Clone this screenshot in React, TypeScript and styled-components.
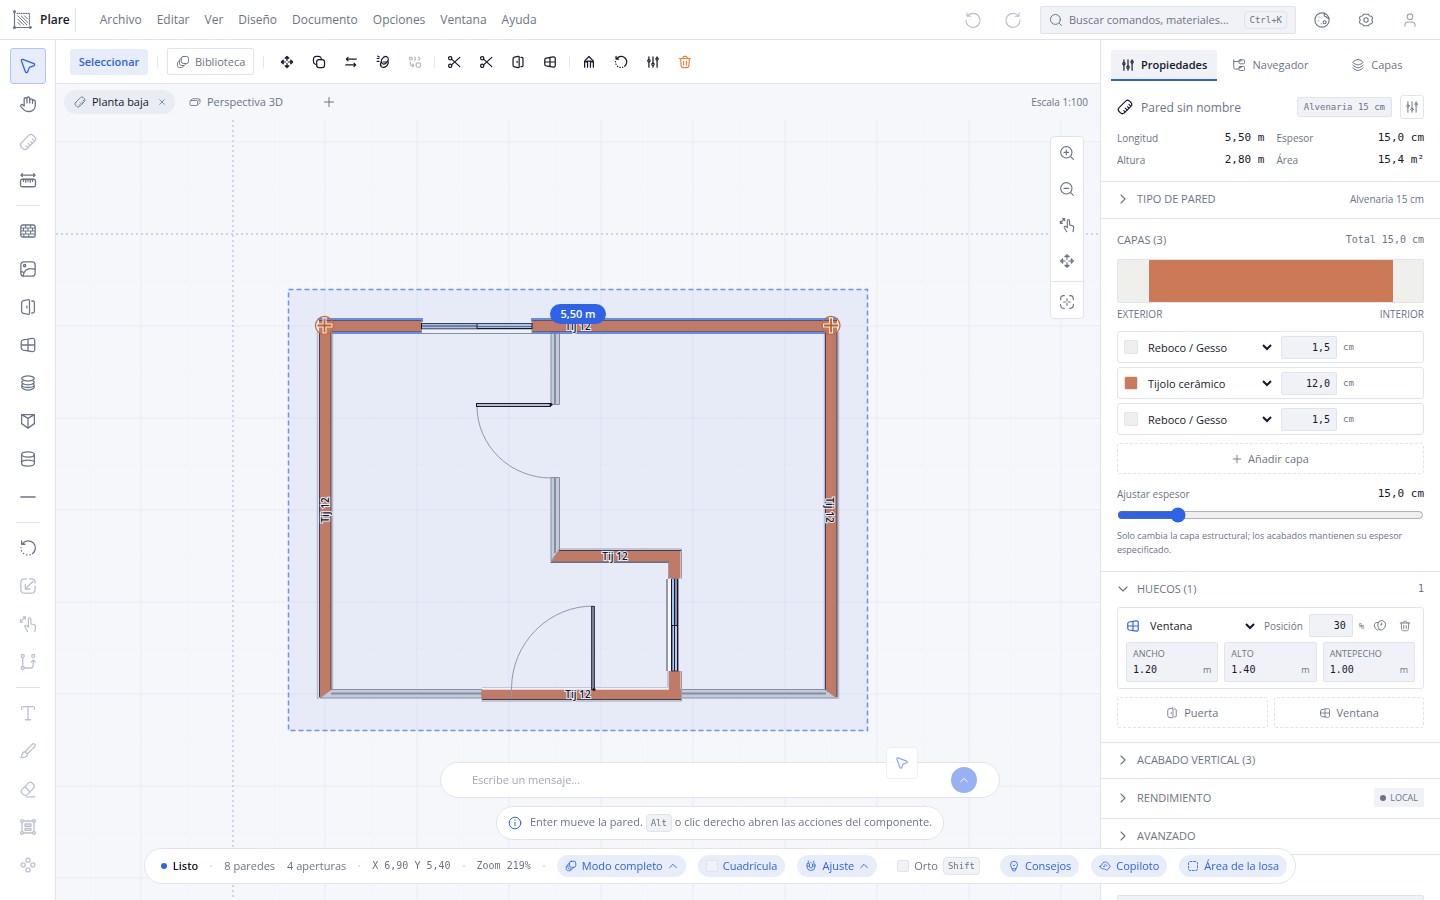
import React from "react";
import styled, { createGlobalStyle, css } from "styled-components";

const color = {
  line: "#dfe4ed",
  text: "#6b7486",
  faint: "#b9c0d0",
  dark: "#16182c",
  accent: "#2e63e7",
  accentSoft: "#e7edfb",
  field: "#f0f2f7",
  canvas: "#f5f7fb",
  brick: "#cb7957",
  plaster: "#eff0ec",
};
const sans = '"Open Sans", "Noto Sans", sans-serif';
const mono = '"DejaVu Sans Mono", "Liberation Mono", monospace';

const GlobalStyle = createGlobalStyle`
  *, *::before, *::after { box-sizing: border-box; }
  body { margin: 0; font-family: ${sans}; font-size: 11px; line-height: 16px; color: ${color.text}; background: ${color.canvas}; }
  button, input, select { font: inherit; color: inherit; margin: 0; }
  button { border: 0; background: none; padding: 0; }
  h1, h2, h3, p, dl, dd { margin: 0; font: inherit; }
`;

/* ---------- icons, drawn on a 24 unit grid ---------- */

const disc = (x: number, y: number, r = 2) => <circle cx={x} cy={y} r={r} />;

const icons: Record<string, React.ReactNode> = {
  logo: (
    <>
      <path d="M3 1v20h20" />
      <path d="M6 4h15v14" strokeDasharray="1 1.6" />
      <path d="M7 7l11 11M7 11l7 7M7 15l3 3M11 7l8 8M15 7l4 4" strokeWidth="1.2" />
      <circle cx="3" cy="2" r="1" fill="currentColor" />
      <circle cx="3" cy="21" r="1.2" fill="currentColor" />
      <circle cx="22" cy="21" r="1" fill="currentColor" />
    </>
  ),
  cursor: <path d="M3.2 5.1c-.5-1.3.6-2.4 1.9-1.9l14.8 5.6c1.5.6 1.4 2.7-.1 3.1l-5.3 1.6c-.5.2-.9.5-1 1l-1.9 5.2c-.5 1.5-2.6 1.5-3.1 0z" />,
  hand: (
    <path d="M18 11V7a1.8 1.8 0 0 0-3.7 0M14.3 10.5V4.5a1.8 1.8 0 0 0-3.7 0v6M10.6 10.5V5.5a1.8 1.8 0 0 0-3.7 0v9M18 8.5a1.8 1.8 0 1 1 3.7 0V14a8 8 0 0 1-8 8h-1.5c-3 0-4.7-1-6-2.5L2.7 15.8a1.8 1.8 0 0 1 2.6-2.5l1.6 1.5" />
  ),
  ruler: (
    <g transform="rotate(-45 12 12)">
      <rect x="1" y="6.5" width="22" height="11" rx="4" />
      <path d="M7 17.5v-3M11 17.5v-4M15 17.5v-3M19 16.5v-3" />
    </g>
  ),
  measure: (
    <>
      <path d="M3 5.5h18M4.5 3.5l-2 2 2 2M19.5 3.5l2 2-2 2" />
      <rect x="2" y="11" width="20" height="10" rx="2.5" />
      <path d="M6 11v3M9 11v4M12 11v3M15 11v4M18 11v3" />
    </>
  ),
  wall: (
    <>
      <rect x="2.5" y="4" width="19" height="16" rx="2.5" />
      <path
        d="M2.5 8h19M2.5 12h19M2.5 16h19M9 4v4M15.5 4v4M6 8v4M12 8v4M18 8v4M9 12v4M15.5 12v4M6.5 16v4M13 16v4"
        strokeWidth="1.4"
      />
    </>
  ),
  image: (
    <>
      <rect x="2.5" y="2.5" width="19" height="19" rx="4" />
      {disc(7.5, 7.5, 1.5)}
      <path d="M5.5 21c1-6 5-9.5 10-9.5 2.5 0 4 .3 6 1M2.5 15.5c1.5 0 3 .5 4 1.5" />
    </>
  ),
  door: (
    <path d="M12.5 2.3 6 3.5C4.5 3.8 3.5 5 3.5 6.5v11c0 1.5 1 2.7 2.5 3l6.5 1.2c1 .2 1.5-.5 1.5-1.5V3.8c0-1-.5-1.7-1.5-1.5zM10.5 11v2M17 4h1.5c1.2 0 2 .8 2 2v12c0 1.2-.8 2-2 2H17" />
  ),
  window: (
    <path d="M5.5 5.2 17.5 3.2c2-.3 3.5 1 3.5 3v11.6c0 2-1.5 3.3-3.5 3L5.5 18.8c-1.5-.3-2.5-1.5-2.5-3V8.2c0-1.5 1-2.7 2.5-3zM12 4v16M3 12h18" />
  ),
  slab: (
    <path d="M12 2.5c3 0 8.5 1.6 8.5 3.5S15 9.5 12 9.500 3.500 7.900 3.500 6 9 2.500 12 2.500zM5 9.500c-4 2 1.500 5 7 5s11-3 7-5M5 13.500c-4 2.500 1.500 4.500 7 4.500s11-2 7-4.500M3.500 17c0 2.500 5 4.500 8.500 4.500s8.500-2 8.500-4.500" />
  ),
  layers: (
    <path d="M12 2.5c1.5 0 9 3 9 4.7S13.5 12 12 12 3 8.9 3 7.2s7.5-4.7 9-4.7zM3 12c0 1.7 7.5 4.8 9 4.8s9-3.1 9-4.8M3 16.7c0 1.7 7.5 4.8 9 4.8s9-3.1 9-4.8" />
  ),
  roof: <path d="M3.5 3.5 12 8.5l8.5-5M3.5 3.5h17v12L12 21.5l-8.5-6zM12 8.5v13" />,
  cylinder: (
    <>
      <ellipse cx="12" cy="6" rx="8.5" ry="3.5" />
      <path d="M3.5 6v12c0 2 3.8 3.5 8.5 3.5s8.5-1.5 8.5-3.5V6M3.5 17c0-2 3.8-3.5 8.5-3.5s8.5 1.5 8.5 3.5" />
    </>
  ),
  minus: <path d="M2.5 12h19" />,
  rotate: (
    <>
      <path d="M3.5 2.5V7H8M4.5 6.5A9.500 9.500 0 1 1 18 19.500" />
      <path d="M15 21a9.500 9.500 0 0 1-12.400-9.500" strokeDasharray=".5 4" />
    </>
  ),
  resize: (
    <path d="M10 2.5H7.5c-3 0-5 2-5 5v9c0 3 2 5 5 5h9c3 0 5-2 5-5V12M14 2.5h2.5c3 0 5 2 5 5V8M18.5 6 8.5 16M8.5 10v6h6" />
  ),
  touch: (
    <path d="M11.5 22 8 16c-.9-1.7 1.2-3 2.4-1.7L12.500 16V5.500a1.700 1.700 0 0 1 3.400 0V12l3.900.9c1.700.4 2.500 1.700 2.200 3.400L21 22M8.500 2.500 2 9M8.500 2.500H5.500M8.500 2.500v3M2 6v3.500h3" />
  ),
  nodes: (
    <>
      {disc(5, 4, 2)}
      {disc(5, 20, 2)}
      {disc(19, 4, 2)}
      <path d="M5 6v12M7 20h8c2.5 0 4-1.5 4-4V9M16.5 12 19 9.5l2.5 2.5" />
    </>
  ),
  text: <path d="M12 3.5v17.5M8.5 21h7M3.5 7V5c0-1 .5-1.5 1.5-1.5h14c1 0 1.5.5 1.5 1.5v2" />,
  brush: <path d="M21 3c-1-1-2.5-.8-3.5.2L8 13l3 3 9.800-9.500c1-1 1.200-2.500.2-3.500zM8 13c-2 0-3.500 1.500-4 4-.2 1.200-.7 2.200-1.800 3.500 3 .5 6 .5 7.500-1 1-1 1.500-2.300 1.300-3.500" />,
  eraser: <path d="M4 12.5 12.5 4c1.5-1.5 3.5-1.5 5 0l2 2c1.5 1.5 1.5 3.5 0 5L11 19.5c-1.500 1.500-3.500 1.500-5 0l-2-2c-1.500-1.500-1.500-3.500 0-5zM8 9l7 7M10 22.500h11" />,
  frame: (
    <>
      {disc(4, 4, 1.8)}
      {disc(20, 4, 1.8)}
      {disc(4, 20, 1.8)}
      {disc(20, 20, 1.8)}
      <path d="M6 4h12M6 20h12M4 6v12M20 6v12M8 8h8v3H8zM8 14h8v2.5H8z" />
    </>
  ),
  clover: (
    <>
      {disc(12, 5.5, 2.8)}
      {disc(12, 18.5, 2.8)}
      {disc(5.5, 12, 2.8)}
      {disc(18.5, 12, 2.8)}
    </>
  ),
  library: (
    <>
      <rect x="9" y="2.5" width="12.5" height="12" rx="3.5" />
      <path d="M9 6.5C7 6.5 5.8 8 5.8 10v4c0 2.5 1.5 4 4 4h3.500c2 0 3.200-1 3.700-3M5.800 10.500c-2 0-3.300 1.200-3.300 3.500v3.500c0 2.500 1.500 4 4 4H9c2 0 3.500-1 3.700-3" />
    </>
  ),
  move: (
    <path d="M8.8 5.5 12 2.3l3.2 3.2zM8.8 18.5 12 21.700l3.200-3.200zM5.500 8.800 2.300 12l3.200 3.200zM18.500 8.800 21.700 12l-3.200 3.200zM12 6v3.500M12 14.500V18M6 12h3.500M14.500 12H18" />
  ),
  copy: (
    <>
      <rect x="8" y="8" width="13.5" height="13.5" rx="4" />
      <path d="M16 8c0-4-1.5-5.5-5.5-5.5H8c-4 0-5.500 1.500-5.500 5.500v2.500c0 4 1.500 5.500 5.500 5.500" />
    </>
  ),
  swap: <path d="M21 7H4M7 4 4 7l3 3M3 17h17M17 14l3 3-3 3" />,
  mirror: (
    <>
      <ellipse cx="15" cy="9" rx="7" ry="5" transform="rotate(-50 15 9)" />
      <path d="M9 12c-2 3-1.5 6 0 8 2.5 2.5 7 1.5 10-2 2-2.500 2.800-5.500 1.500-8M2 6h3M2 11h3M3 2l2.500 1.500M12 12h6" />
    </>
  ),
  array: (
    <>
      {disc(5, 6, 2.5)}
      <path d="M11 3.5c2.5 1 2.5 4 0 5M17.5 3.5c3.5 1 3.5 4 0 5M4 12v4c0 1.500.8 2 2 2h3M7.500 15.500 10 18l-2.500 2.500" />
      <rect x="14" y="13.5" width="7.5" height="7.5" rx="2.5" />
    </>
  ),
  scissors: (
    <>
      {disc(5.5, 5.5, 2.8)}
      {disc(5.5, 18.5, 2.8)}
      <path d="M22 4 7.8 17M22 20 7.8 7" />
    </>
  ),
  pencil: <path d="M4.5 21V10.5L12 2.5l7.5 8V21M9.5 21v-9M14.5 21v-9M4.5 12c2 0 3.5-.5 5-1.5h5c1.500 1 3 1.500 5 1.500" />,
  sliders: (
    <>
      <path d="M5 3v5M5 12v9M12 3v11M12 18v3M19 3v2M19 9v12" />
      {disc(5, 10, 2)}
      {disc(12, 16, 2)}
      {disc(19, 7, 2)}
    </>
  ),
  trash: <path d="M2.5 6h19M19.5 6l-.8 12c-.2 2.5-1.2 3.5-3.7 3.5H9c-2.500 0-3.500-1-3.700-3.500L4.500 6M8 6l1-2.500c.3-.8.8-1 1.500-1h3c.7 0 1.200.2 1.500 1L16 6M9.500 11v6M14.500 11v6" />,
  undo: <path d="M4 2.5V7h5M4.5 7A9.300 9.300 0 1 1 2.700 12" />,
  redo: <path d="M20 2.5V7h-5M19.5 7A9.300 9.300 0 1 0 21.300 12" />,
  search: (
    <>
      {disc(11, 11, 8.5)}
      <path d="m17.5 17.5 4 4" />
    </>
  ),
  theme: (
    <>
      {disc(12, 12, 9.5)}
      <path d="M15.5 3.5c-1 2-.5 4 2 4 .5 2 2 2.500 4 2.500M8 8v.1M7 13v.1M11 17v.1" />
      {disc(15.5, 15, 2)}
    </>
  ),
  gear: (
    <>
      <path d="M8.5 3.5h7l2 2.5 3 .5 1.500 3-1.500 2.500 1.500 2.500-1.500 3-3 .5-2 2.500h-7l-2-2.500-3-.5-1.500-3L3.500 12 2 9.500l1.500-3 3-.5z" />
      {disc(12, 12, 3.3)}
    </>
  ),
  user: (
    <>
      {disc(12, 7, 4.2)}
      <path d="M4.5 21.5v-2c0-2.5 2-4.500 4.500-4.500h6c2.500 0 4.500 2 4.500 4.500v2" />
    </>
  ),
  tree: (
    <>
      <path d="M3 3v13c0 2 1 3 3 3h5M3 6h8" />
      <rect x="12" y="3" width="9.5" height="7" rx="2" />
      <rect x="12" y="14.5" width="9.5" height="7" rx="2" />
      <path d="M12 5h4M12 16.5h4" />
    </>
  ),
  box: <path d="M4 9h11c1.2 0 2 .8 2 2v6c0 1.2-.8 2-2 2H4c-1.200 0-2-.8-2-2v-6c0-1.200.8-2 2-2zM3 9.500C5 6 6.500 5.500 8 5.500h11c2 0 3 1 3 3v4c0 2-2 3.500-5 5M17 11l4.500-4" />,
  close: <path d="M5 5l14 14M19 5 5 19" />,
  plus: <path d="M12 3v18M3 12h18" />,
  zoomIn: (
    <>
      {disc(11, 11, 8.5)}
      <path d="m17.5 17.5 4 4M7.5 11h7M11 7.5v7" />
    </>
  ),
  zoomOut: (
    <>
      {disc(11, 11, 8.5)}
      <path d="m17.5 17.5 4 4M7.5 11h7" />
    </>
  ),
  focus: <path d="M8 2.5H7C4 2.500 2.500 4 2.500 7v1.500M16 2.500h1c3 0 4.500 1.500 4.500 4.500v1.500M8 21.500H7c-3 0-4.500-1.500-4.500-4.500v-1.500M16 21.500h1c3 0 4.500-1.500 4.500-4.500v-1.500M12 7v3M12 14v3M7 12h3M14 12h3" />,
  right: <path d="m8 4 8 8-8 8" />,
  down: <path d="m4 8 8 8 8-8" />,
  up: <path d="m4 16 8-8 8 8" />,
  info: (
    <>
      {disc(12, 12, 10)}
      <path d="M12 11v6M12 7v.5" />
    </>
  ),
  magnet: <path d="M4 8v5a8 8 0 0 0 16 0V8h-5v5a3 3 0 0 1-6 0V8zM4 12h5M15 12h5M6.5 2v3M17.5 2v3M11 4l2 2" />,
  bulb: <path d="M8 17c0-2-3-3.500-3-7.500a7 7 0 0 1 14 0c0 4-3 5.500-3 7.500zM8.500 17v2c0 1.700 1 3 3.500 3s3.500-1.300 3.500-3v-2M10 10l2 2 2-2" />,
  copilot: (
    <path d="M2 13c0-2 2-2.500 3.500-2.500C6 6.500 9 4 12.500 4c4 0 6.500 2.500 7 5.500 1.500.3 2.500 1.500 2.500 3s-1 3-2.500 3c-.5 3-2.500 5-5 4.500-1.500-.3-2-1.500-3.500-2-2-.7-4 .5-5.500-1.500C3.500 16.500 2 15 2 13zM11 10c2-1.500 4.500-.5 4.500 2M9 13h2" />
  ),
  area: <rect x="3" y="3" width="18" height="18" rx="3" strokeDasharray="4 3.2" />,
  palette: (
    <path d="M8.5 6c-3-.5-5.500 1-6 3.500-.6 3 1 6.500 4 9 1 .8 2.500 1 3 0M10 5c2-2.500 5-3 8-1.500s4 5 3 8.500-4 7-7 7-5-3-5.500-6.500S8.500 7 10 5zM15 7v2M13 10h2" />
  ),
};

const Svg = styled.svg`
  display: block;
  flex: none;
  fill: none;
  stroke: currentColor;
  stroke-linecap: round;
  stroke-linejoin: round;
`;

const Icon = ({ name, size = 16, weight = 1.7 }: { name: string; size?: number; weight?: number }) => (
  <Svg viewBox="0 0 24 24" width={size} height={size} strokeWidth={weight} aria-hidden="true">
    {icons[name]}
  </Svg>
);

/* ---------- frame ---------- */

const Shell = styled.div`
  display: grid;
  grid-template: 40px minmax(0, 1fr) / 56px minmax(0, 1fr) 340px;
  height: 100vh;
  overflow: hidden;
`;
const Header = styled.header`
  grid-column: 1 / -1;
  display: flex;
  align-items: center;
  padding: 0 14px 0 12px;
  background: #fff;
  border-bottom: 1px solid ${color.line};
`;
const Brand = styled.div`
  display: flex;
  align-items: center;
  gap: 8px;
  height: 24px;
  padding-right: 5px;
  margin-right: 17px;
  border-right: 1px solid ${color.line};
  color: ${color.text};
`;
const BrandName = styled.h1`
  color: ${color.dark};
  font-size: 12px;
  font-weight: 600;
`;
const Menu = styled.nav`
  display: flex;
  flex: 1;
  gap: 1px;
`;
const MenuItem = styled.button`
  padding: 4px 7px;
  font-size: 12px;
`;
const HeaderActions = styled.div`
  display: flex;
  align-items: center;
  gap: 12px;
`;
const IconButton = styled.button<{ $size?: number; $tone?: string }>`
  display: grid;
  place-items: center;
  flex: none;
  width: ${(p) => p.$size ?? 28}px;
  height: ${(p) => p.$size ?? 28}px;
  color: ${(p) => p.$tone ?? "inherit"};
`;
const SearchBox = styled.button`
  display: flex;
  align-items: center;
  gap: 6px;
  width: 256px;
  height: 28px;
  margin: 0 10px 0 1px;
  padding: 0 8px;
  border: 1px solid ${color.line};
  border-radius: 2px;
  background: ${color.field};
`;
const SearchText = styled.span`
  flex: 1;
  text-align: left;
  white-space: nowrap;
`;
const Key = styled.kbd<{ $fill?: boolean }>`
  display: inline-block;
  padding: 0 4px;
  border: 1px solid ${color.line};
  border-radius: 4px;
  background: ${(p) => (p.$fill ? color.field : "transparent")};
  font-family: ${mono};
  font-size: 9px;
  line-height: 16px;
`;

const Rail = styled.nav`
  display: flex;
  flex-direction: column;
  align-items: center;
  gap: 2px;
  padding-top: 8px;
  background: #fff;
  border-right: 1px solid ${color.line};
`;
const RailButton = styled.button<{ $active?: boolean; $off?: boolean }>`
  display: grid;
  place-items: center;
  flex: none;
  width: 36px;
  height: 36px;
  border: 1px solid transparent;
  border-radius: 3px;
  color: ${(p) => (p.$off ? color.faint : color.text)};
  ${(p) =>
    p.$active &&
    css`
      color: ${color.accent};
      background: ${color.accentSoft};
      border-color: #b1c5f6;
    `}
`;
const RailRule = styled.hr`
  width: 24px;
  margin: 5px 0;
  border: 0;
  border-top: 1px solid ${color.line};
`;

const Workspace = styled.main`
  display: flex;
  flex-direction: column;
  min-width: 0;
`;
const Toolbar = styled.div`
  display: flex;
  align-items: center;
  flex: none;
  height: 44px;
  padding: 0 14px;
  background: #fff;
  border-bottom: 1px solid ${color.line};
`;
const ToolGroup = styled.div`
  display: flex;
  gap: 4px;
  color: ${color.dark};
`;
const Rule = styled.span<{ $space: number }>`
  width: 1px;
  height: 12px;
  margin: 0 ${(p) => p.$space}px;
  background: #dfe8f3;
`;
const SelectMode = styled.button`
  width: 78px;
  height: 26px;
  border-radius: 3px;
  background: ${color.accentSoft};
  color: ${color.accent};
  font-weight: 600;
`;
const LibraryButton = styled.button`
  display: flex;
  align-items: center;
  gap: 5px;
  height: 27px;
  padding: 0 8px;
  border: 1px solid ${color.line};
  border-radius: 2px;
`;
const DocTabs = styled.div`
  display: flex;
  align-items: center;
  flex: none;
  gap: 4px;
  height: 36px;
  padding: 0 12px 0 8px;
`;
const DocTab = styled.div<{ $active?: boolean }>`
  display: flex;
  align-items: center;
  gap: 6px;
  height: 24px;
  padding: 0 ${(p) => (p.$active ? 6 : 10)}px 0 10px;
  border-radius: 12px;
  ${(p) => p.$active && `background: #e9ecf3;`}
`;
const DocName = styled.button<{ $active?: boolean }>`
  color: ${(p) => (p.$active ? color.dark : "inherit")};
  font-weight: ${(p) => (p.$active ? 500 : 400)};
`;
const NewTab = styled(IconButton)`
  margin-left: 18px;
`;
const Scale = styled.span`
  margin-left: auto;
  font-size: 10px;
`;
const Stage = styled.div`
  position: relative;
  flex: 1;
  min-height: 0;
  overflow: hidden;
`;
const Plan = styled.svg`
  display: block;
  width: 100%;
  height: 100%;
  font-family: ${sans};
`;
const ViewTools = styled.div`
  position: absolute;
  top: 16px;
  right: 16px;
  display: flex;
  flex-direction: column;
  gap: 4px;
  border: 1px solid ${color.line};
  border-radius: 4px;
  background: #fff;
`;
const ViewRule = styled.hr`
  width: 100%;
  margin: 0;
  border: 0;
  border-top: 1px solid ${color.line};
`;

/* ---------- plan drawing ---------- */

const steps = (from: number, to: number) => {
  const out: number[] = [];
  for (let v = from; v <= to; v += 92) out.push(v);
  return out;
};
const gray = "#868f9f";
const paleWall = "#c3cada";
const clay = "#c17a66";
const ink = "#3f3c56";

const WallTag = ({ x, y, turn = 0 }: { x: number; y: number; turn?: number }) => (
  <text
    x={x}
    y={y}
    dy="3"
    transform={turn ? `rotate(${turn} ${x} ${y})` : undefined}
    textAnchor="middle"
    fontSize="10"
    fontWeight="600"
    fill={color.dark}
    stroke="#e9ecf6"
    strokeWidth="2"
    paintOrder="stroke"
  >
    Tij 12
  </text>
);

const EndMark = ({ x }: { x: number }) => (
  <g fill="none" strokeLinecap="butt">
    <circle cx={x} cy="325.5" r="9" stroke="#c86a38" strokeWidth="1.3" />
    <path d={`M${x - 8} 325.5h16M${x} 317.5v16`} stroke="#f4ece9" strokeWidth="4" />
    <path d={`M${x - 7} 325.5h14M${x} 318.5v14`} stroke="#c4611f" strokeWidth="1.8" />
  </g>
);

const FloorPlan = () => (
  <Plan viewBox="56 120 1044 780" preserveAspectRatio="xMidYMid slice" role="img" aria-label="Planta baja">
    <rect x="288.5" y="289.5" width="579" height="441" fill="#e7ebf8" />
    <g stroke="#c4cbe6" strokeOpacity=".14" strokeWidth="2">
      {[141, ...steps(325, 1100)].map((x) => (
        <path key={x} d={`M${x} 120V900`} />
      ))}
      {[142, ...steps(326, 900)].map((y) => (
        <path key={y} d={`M56 ${y}H1100`} />
      ))}
    </g>
    <g stroke="#c4cbe6" strokeOpacity=".16" strokeDasharray="1 3">
      {steps(95, 1100).map((x) => (
        <path key={x} d={`M${x}.5 120V900`} />
      ))}
      {steps(188, 900).map((y) => (
        <path key={y} d={`M56 ${y}.5H1100`} />
      ))}
    </g>
    <path d="M233 120V900M56 234H1100" fill="none" stroke="#c9d4f2" strokeWidth="2" strokeDasharray="2 3" />

    {/* plaster-coloured partitions */}
    <g fill={paleWall} stroke={gray}>
      <path d="M551 332h8.5v72.5H551zM551 477.5h8.5V550l-8.5 11zM331 689.5h151v8.5H320zM681 689.5h144l12 8.5H681z" />
      <path d="M555 333v71M555 478v75M331 693.5h151M681 693.5h145" strokeWidth="2" />
    </g>

    {/* brick walls */}
    <g fill={clay}>
      <path d="M319 320h102.5v11.5H331V690l-11.5 8zM532 320h305v378l-11.5-8V331.5H532z" />
      <path d="M559 550h121.500v28.500h-11.500V561.500H551.500zM669 671h11.500v18.500h.5v10H481.500v-10H669z" />
    </g>
    <g fill="none" stroke="#b5bccd">
      <path d="M317.5 332v366h2M332.5 333v356M824.5 333v356M838.5 332v366h-3" strokeWidth="1.5" />
      <path d="M558 549h123.5v29.5M550 562.5h118.5V579M482 687.5h186V671M481.5 701h200V671" stroke="#97a0b0" />
    </g>
    <g fill="none" stroke={ink}>
      <path d="M319.5 332v365M331 332v357.5M825.5 332v357.5M837 332v365M559 550.5h122M551 562h118M482 699.5h199" />
      <path d="M319 320.5h102.5M331 331.5h90.5M532 320.5h305M532 331.5h294" strokeOpacity=".7" />
    </g>
    <path d="M482 688.5h186" stroke="#eef1f8" strokeWidth="2" />
    <path
      d="M318 319h104v3M332 333h90M532 322v-3h306M532 333h293"
      fill="none"
      stroke="#4a7cec"
      strokeWidth="2"
      strokeOpacity=".85"
    />

    {/* window in the top wall */}
    <rect x="421.5" y="329" width="110.5" height="4.5" fill="#edf0f9" stroke={gray} />
    <rect x="421.5" y="323" width="110.5" height="6" fill="#a9bfec" />
    <path d="M421.5 323.5h110.5M421.5 326h55" stroke={ink} />
    <path d="M421.5 328.5h110.5M477 326.5h55" stroke="#5d6884" />
    <path d="M421.5 323v6M532 323v6M477 324v4.5h55" fill="none" stroke={color.dark} />

    {/* window beside the entrance */}
    <rect x="667" y="579" width="5" height="92" fill="#f4f6fc" />
    <path d="M667 579v92" stroke={ink} />
    <rect x="672" y="579" width="6" height="92" fill="#b9c9ee" stroke={ink} />
    <path d="M673 579v46" stroke="#a2c1f9" strokeWidth="2" />
    <path d="M676.5 579v46" stroke="#8a939f" strokeWidth="3" />
    <path d="M671.5 579v92M674.5 579v92M677.5 579v92M672 625.5h6" stroke={color.dark} />

    {/* inner door */}
    <path d="M477 406A74 72 0 0 0 551 478" fill="none" stroke="#9298aa" />
    <rect x="476.5" y="403.5" width="74" height="3" fill="#b7bccf" stroke={color.dark} />
    <circle cx="551" cy="404.5" r="1.5" fill={color.dark} />

    {/* entrance door */}
    <path d="M594 606A82 83 0 0 0 511.5 688v10" fill="none" stroke="#9298aa" />
    <rect x="591.5" y="606.5" width="3" height="83" fill="#7c8096" stroke={ink} />
    <circle cx="594" cy="689.5" r="1.5" fill={color.dark} />

    <rect
      x="288.5"
      y="289.5"
      width="579"
      height="441"
      fill="none"
      stroke="#6c93ee"
      strokeWidth="1.5"
      strokeDasharray="5 3"
    />

    <WallTag x={578} y={327} />
    <WallTag x={615} y={557} />
    <WallTag x={578} y={695} />
    <WallTag x={326} y={510} turn={-90} />
    <WallTag x={829} y={510} turn={90} />
    <EndMark x={324.5} />
    <EndMark x={831} />
    <rect x="550" y="304" width="56" height="20" rx="10" fill={color.accent} />
    <text x="578" y="318" textAnchor="middle" fontSize="11" fontWeight="600" fill="#fff">
      5,50 m
    </text>
  </Plan>
);

/* ---------- properties panel ---------- */

const Panel = styled.aside`
  min-width: 0;
  overflow: hidden;
  background: #fff;
  border-left: 1px solid ${color.line};
`;
const PanelTabs = styled.div`
  display: grid;
  grid-template-columns: repeat(3, 1fr);
  padding: 10px 10px 0;
`;
const PanelTab = styled.button<{ $active?: boolean }>`
  display: flex;
  align-items: center;
  justify-content: center;
  gap: 6px;
  height: 31px;
  border-bottom: 2px solid transparent;
  border-radius: 3px 3px 0 0;
  font-weight: 500;
  ${(p) =>
    p.$active &&
    css`
      color: ${color.dark};
      font-weight: 600;
      background: ${color.field};
      border-color: ${color.accent};
    `}
`;
const Section = styled.section<{ $top?: number; $bottom?: number }>`
  padding: ${(p) => p.$top ?? 0}px 16px ${(p) => p.$bottom ?? 0}px;
  border-bottom: 1px solid ${color.line};
`;
const Row = styled.div`
  display: flex;
  align-items: center;
  justify-content: space-between;
`;
const TitleRow = styled.div`
  display: flex;
  align-items: center;
  gap: 8px;
  margin-bottom: 8px;
  color: ${color.dark};
`;
const ElementName = styled.h2`
  flex: 1;
  padding-top: 2px;
  color: ${color.text};
  font-size: 12px;
`;
const TypeTag = styled.span`
  padding: 0 6px;
  border: 1px solid ${color.line};
  border-radius: 2px;
  background: ${color.field};
  color: ${color.text};
  font-family: ${mono};
  font-size: 9px;
  line-height: 18px;
`;
const OutlineButton = styled(IconButton)`
  border: 1px solid ${color.line};
  border-radius: 3px;
  color: ${color.text};
`;
const Stats = styled.dl`
  display: grid;
  grid-template-columns: 1fr 1fr;
  gap: 0 12px;
`;
const Stat = styled.div`
  display: flex;
  justify-content: space-between;
  line-height: 22px;
  font-size: 10px;
`;
const Value = styled.dd`
  color: ${color.dark};
  font-family: ${mono};
  font-size: 11px;
`;
const Fold = styled.button<{ $height: number }>`
  display: flex;
  align-items: center;
  gap: 8px;
  width: 100%;
  height: ${(p) => p.$height}px;
  padding-bottom: 2px;
  text-align: left;
`;
const Heading = styled.h3`
  flex: 1;
  font-weight: 500;
`;
const Small = styled.span`
  font-size: 10px;
`;
const MonoSmall = styled.span`
  font-family: ${mono};
  font-size: 10px;
`;
const Strip = styled.div`
  display: grid;
  grid-template-columns: 1fr 8fr 1fr;
  height: 44px;
  margin: 11px 0 3px;
  border: 1px solid ${color.line};
  border-radius: 2px;
  overflow: hidden;
`;
const Swatch = styled.span<{ $fill: string }>`
  background: ${(p) => p.$fill};
`;
const Chip = styled(Swatch)`
  flex: none;
  width: 14px;
  height: 14px;
  border: 1px solid ${color.line};
  border-radius: 2px;
`;
const LayerList = styled.div`
  display: grid;
  gap: 4px;
  margin: 9px 0 8px;
`;
const Layer = styled.div`
  display: flex;
  align-items: center;
  gap: 6px;
  height: 32px;
  padding: 0 6px;
  border: 1px solid ${color.line};
  border-radius: 3px;
`;
const Picker = styled.select<{ $width: number }>`
  width: ${(p) => p.$width}px;
  height: 24px;
  padding: 0;
  border: 0;
  background: transparent;
  color: ${color.dark};
`;
const NumberField = styled.input<{ $width: number }>`
  width: ${(p) => p.$width}px;
  height: 23px;
  padding: 0 6px;
  border: 1px solid ${color.line};
  border-radius: 2px;
  background: ${color.field};
  color: ${color.dark};
  font-family: ${mono};
  font-size: 10px;
  text-align: right;
`;
const Unit = styled.span`
  font-family: ${mono};
  font-size: 9px;
`;
const DashedButton = styled.button`
  display: flex;
  align-items: center;
  justify-content: center;
  gap: 6px;
  width: 100%;
  height: 31px;
  border: 1px dashed ${color.line};
  border-radius: 3px;
`;
const SliderLabel = styled.label`
  display: flex;
  justify-content: space-between;
  align-items: center;
  margin-top: 12px;
  font-size: 10px;
`;
const Slider = styled.input`
  display: block;
  width: 100%;
  height: 16px;
  margin: 5px 0 6px;
  accent-color: ${color.accent};
`;
const Note = styled.p`
  font-size: 9px;
  line-height: 14px;
`;
const Opening = styled.div`
  padding: 6px 8px;
  border: 1px solid ${color.line};
  border-radius: 3px;
`;
const OpeningTop = styled.div`
  display: flex;
  align-items: center;
  gap: 6px;
  height: 23px;
  margin-bottom: 5px;
`;
const Tint = styled.span`
  color: ${color.accent};
`;
const Actions = styled.div`
  display: flex;
  flex: 1;
  justify-content: space-between;
`;
const Dims = styled.div`
  display: grid;
  grid-template-columns: repeat(3, 1fr);
  gap: 6px;
`;
const Dim = styled.label`
  display: grid;
  grid-template-columns: 1fr auto;
  align-items: center;
  height: 40px;
  padding: 3px 6px;
  border: 1px solid ${color.line};
  border-radius: 2px;
  background: ${color.field};
  font-size: 9px;
  line-height: 16px;
`;
const DimName = styled.span`
  grid-column: 1 / -1;
`;
const DimInput = styled.input`
  width: 100%;
  height: 16px;
  padding: 0;
  border: 0;
  background: none;
  color: ${color.dark};
  font-family: ${mono};
  font-size: 10px;
`;
const Pair = styled.div`
  display: grid;
  grid-template-columns: 1fr 1fr;
  gap: 6px;
  margin-top: 8px;
`;
const Badge = styled.span`
  display: flex;
  align-items: center;
  gap: 4px;
  height: 19px;
  padding: 0 6px;
  background: ${color.field};
  font-size: 9px;
  font-weight: 500;
`;
const Dot = styled.span<{ $tone?: string }>`
  width: 6px;
  height: 6px;
  border-radius: 50%;
  background: ${(p) => p.$tone ?? color.text};
`;
const FieldStub = styled.div`
  height: 28px;
  margin: 40px 16px 0;
  border: 1px solid ${color.line};
  border-radius: 2px;
  background: ${color.field};
`;

/* ---------- floating bars ---------- */

const Dock = styled.div`
  position: fixed;
  bottom: 16px;
  left: 0;
  right: 0;
  display: flex;
  flex-direction: column;
  align-items: center;
  gap: 8px;
  pointer-events: none;
`;
const Bar = styled.div`
  display: flex;
  align-items: center;
  height: 36px;
  border: 1px solid ${color.line};
  border-radius: 18px;
  background: #fff;
  white-space: nowrap;
  pointer-events: auto;
`;
const Chat = styled(Bar)`
  position: relative;
  width: 560px;
  padding: 0 22px 0 31px;
`;
const ChatInput = styled.input`
  flex: 1;
  border: 0;
  outline: 0;
  padding: 0;
  background: none;
  &::placeholder {
    color: #a0a6b3;
    opacity: 1;
  }
`;
const Send = styled(IconButton)`
  border-radius: 50%;
  background: #97b1f3;
  color: #fff;
`;
const CursorBadge = styled.span`
  position: absolute;
  top: -16px;
  right: 81px;
  display: grid;
  place-items: center;
  width: 32px;
  height: 32px;
  border: 1px solid #eceff4;
  border-radius: 4px;
  background: rgba(255, 255, 255, 0.8);
  color: #8ba8f1;
`;
const Hint = styled(Bar)`
  gap: 8px;
  height: 34px;
  padding: 0 11px;
`;
const Status = styled(Bar)`
  gap: 12px;
  padding: 0 8px 0 16px;
`;
const Ready = styled.span`
  display: flex;
  align-items: center;
  gap: 6px;
  color: ${color.dark};
  font-weight: 600;
`;
const Speck = styled.span`
  width: 2px;
  height: 2px;
  background: ${color.line};
`;
const Readout = styled.span`
  font-family: ${mono};
  font-size: 10px;
`;
const pill = css`
  display: flex;
  align-items: center;
  gap: 5px;
  height: 22px;
  padding: 0 8px;
  border-radius: 11px;
`;
const Pill = styled.button`
  ${pill}
  background: ${color.accentSoft};
  color: ${color.accent};
  font-weight: 500;
`;
const Toggle = styled.label<{ $on?: boolean }>`
  ${pill}
  background: ${(p) => (p.$on ? color.accentSoft : "none")};
  color: ${(p) => (p.$on ? color.accent : "inherit")};
  font-weight: ${(p) => (p.$on ? 500 : 400)};
`;
const Tick = styled.input`
  appearance: none;
  width: 12px;
  height: 12px;
  border: 1px solid ${color.line};
  border-radius: 2px;
  background: ${color.field};
`;

type Tool = { icon: string; label: string; off?: boolean } | null;

const railTools: Tool[] = [
  { icon: "cursor", label: "Seleccionar" },
  { icon: "hand", label: "Mover vista" },
  { icon: "ruler", label: "Regla", off: true },
  { icon: "measure", label: "Medir" },
  null,
  { icon: "wall", label: "Pared" },
  { icon: "image", label: "Imagen" },
  { icon: "door", label: "Puerta" },
  { icon: "window", label: "Ventana" },
  { icon: "slab", label: "Losa" },
  { icon: "roof", label: "Cubierta" },
  { icon: "cylinder", label: "Pilar" },
  { icon: "minus", label: "Línea" },
  null,
  { icon: "rotate", label: "Rotar" },
  { icon: "resize", label: "Escalar", off: true },
  { icon: "touch", label: "Arrastrar", off: true },
  { icon: "nodes", label: "Nodos", off: true },
  null,
  { icon: "text", label: "Texto", off: true },
  { icon: "brush", label: "Pincel", off: true },
  { icon: "eraser", label: "Borrador", off: true },
  { icon: "frame", label: "Grupo", off: true },
  { icon: "clover", label: "Componentes", off: true },
];

const toolGroups: string[][] = [
  ["move", "copy", "swap", "mirror", "array"],
  ["scissors", "scissors", "door", "window"],
  ["pencil", "rotate", "sliders", "trash"],
];

const layers = [
  { name: "Reboco / Gesso", size: "1,5", fill: color.plaster },
  { name: "Tijolo cerâmico", size: "12,0", fill: color.brick },
  { name: "Reboco / Gesso", size: "1,5", fill: color.plaster },
];

export default function App() {
  return (
    <Shell>
      <GlobalStyle />
      <Header>
        <Brand>
          <Icon name="logo" size={20} weight={1.4} />
          <BrandName>Plare</BrandName>
        </Brand>
        <Menu>
          {["Archivo", "Editar", "Ver", "Diseño", "Documento", "Opciones", "Ventana", "Ayuda"].map((m) => (
            <MenuItem key={m}>{m}</MenuItem>
          ))}
        </Menu>
        <HeaderActions>
          <IconButton $tone={color.faint} aria-label="Deshacer"><Icon name="undo" size={18} weight={1.5} /></IconButton>
          <IconButton $tone={color.faint} aria-label="Rehacer"><Icon name="redo" size={18} weight={1.5} /></IconButton>
          <SearchBox>
            <Icon name="search" size={14} />
            <SearchText>Buscar comandos, materiales...</SearchText>
            <Key>Ctrl+K</Key>
          </SearchBox>
        </HeaderActions>
        <HeaderActions>
          <IconButton $size={32} aria-label="Tema"><Icon name="theme" size={18} weight={1.5} /></IconButton>
          <IconButton $size={32} aria-label="Ajustes"><Icon name="gear" size={16} weight={1.6} /></IconButton>
          <IconButton $size={32} $tone="#9ba3b5" aria-label="Cuenta"><Icon name="user" size={16} weight={1.6} /></IconButton>
        </HeaderActions>
      </Header>

      <Rail>
        {railTools.map((t, i) =>
          t ? (
            <RailButton key={i} $active={i === 0} $off={t.off} aria-label={t.label}>
              <Icon name={t.icon} size={18} />
            </RailButton>
          ) : (
            <RailRule key={i} />
          ),
        )}
      </Rail>

      <Workspace>
        <Toolbar>
          <SelectMode>Seleccionar</SelectMode>
          <Rule $space={9} />
          <LibraryButton>
            <Icon name="library" size={14} />
            Biblioteca
          </LibraryButton>
          <Rule $space={9} />
          {toolGroups.map((group, g) => (
            <React.Fragment key={g}>
              {g > 0 && <Rule $space={5} />}
              <ToolGroup>
                {group.map((name, i) => (
                  <IconButton
                    key={i}
                    aria-label={name}
                    $tone={name === "trash" ? "#e5893f" : name === "array" ? "#b4b8c6" : undefined}
                  >
                    <Icon name={name} size={14} weight={2.1} />
                  </IconButton>
                ))}
              </ToolGroup>
            </React.Fragment>
          ))}
        </Toolbar>
        <DocTabs>
          <DocTab $active>
            <Icon name="ruler" size={12} />
            <DocName $active>Planta baja</DocName>
            <IconButton $size={14} aria-label="Cerrar"><Icon name="close" size={8} weight={2.4} /></IconButton>
          </DocTab>
          <DocTab>
            <Icon name="box" size={12} />
            <DocName>Perspectiva 3D</DocName>
          </DocTab>
          <NewTab aria-label="Nueva vista"><Icon name="plus" size={12} weight={2} /></NewTab>
          <Scale>Escala 1:100</Scale>
        </DocTabs>
        <Stage>
          <FloorPlan />
          <ViewTools>
            {["zoomIn", "zoomOut", "touch", "move"].map((n) => (
              <IconButton key={n} $size={32} aria-label={n}><Icon name={n} size={16} /></IconButton>
            ))}
            <ViewRule />
            <IconButton $size={32} aria-label="Centrar"><Icon name="focus" size={16} /></IconButton>
          </ViewTools>
        </Stage>
      </Workspace>

      <Panel>
        <PanelTabs role="tablist">
          <PanelTab $active role="tab"><Icon name="sliders" size={14} weight={2} />Propiedades</PanelTab>
          <PanelTab role="tab"><Icon name="tree" size={14} />Navegador</PanelTab>
          <PanelTab role="tab"><Icon name="layers" size={14} />Capas</PanelTab>
        </PanelTabs>

        <Section $top={14} $bottom={10}>
          <TitleRow>
            <Icon name="ruler" size={16} />
            <ElementName>Pared sin nombre</ElementName>
            <TypeTag>Alvenaria 15 cm</TypeTag>
            <OutlineButton $size={24} aria-label="Opciones de tipo"><Icon name="sliders" size={14} /></OutlineButton>
          </TitleRow>
          <Stats>
            {[["Longitud", "5,50 m"], ["Espesor", "15,0 cm"], ["Altura", "2,80 m"], ["Área", "15,4 m²"]].map(([k, v]) => (
              <Stat key={k}>
                <dt>{k}</dt>
                <Value>{v}</Value>
              </Stat>
            ))}
          </Stats>
        </Section>

        <Section>
          <Fold $height={36}>
            <Icon name="right" size={12} weight={2.2} />
            <Heading as="span">TIPO DE PARED</Heading>
            <Small>Alvenaria 15 cm</Small>
          </Fold>
        </Section>

        <Section $top={13} $bottom={14}>
          <Row>
            <Heading>CAPAS (3)</Heading>
            <MonoSmall>Total 15,0 cm</MonoSmall>
          </Row>
          <Strip>
            {layers.map((l, i) => (
              <Swatch key={i} $fill={l.fill} />
            ))}
          </Strip>
          <Row>
            <Small>EXTERIOR</Small>
            <Small>INTERIOR</Small>
          </Row>
          <LayerList>
            {layers.map((l, i) => (
              <Layer key={i}>
                <Chip $fill={l.fill} />
                <Picker $width={131} aria-label="Material" defaultValue={l.name}>
                  <option>{l.name}</option>
                </Picker>
                <NumberField $width={56} aria-label="Espesor de capa" defaultValue={l.size} />
                <Unit>cm</Unit>
              </Layer>
            ))}
          </LayerList>
          <DashedButton>
            <Icon name="plus" size={10} weight={2.2} />
            Añadir capa
          </DashedButton>
          <SliderLabel htmlFor="thickness">
            Ajustar espesor
            <Value as="span">15,0 cm</Value>
          </SliderLabel>
          <Slider id="thickness" type="range" min={5} max={60} defaultValue={15} />
          <Note>Solo cambia la capa estructural; los acabados mantienen su espesor especificado.</Note>
        </Section>

        <Section $bottom={14}>
          <Fold $height={35}>
            <Icon name="down" size={12} weight={2.2} />
            <Heading as="span">HUECOS (1)</Heading>
            <MonoSmall>1</MonoSmall>
          </Fold>
          <Opening>
            <OpeningTop>
              <Tint><Icon name="window" size={14} weight={2} /></Tint>
              <Picker $width={112} aria-label="Tipo de hueco" defaultValue="Ventana">
                <option>Ventana</option>
              </Picker>
              <Small as="label" htmlFor="position">Posición</Small>
              <NumberField id="position" $width={44} defaultValue="30" />
              <Unit>%</Unit>
              <Actions>
                <IconButton $size={20} aria-label="Estilo"><Icon name="palette" size={14} /></IconButton>
                <IconButton $size={20} aria-label="Eliminar"><Icon name="trash" size={12} /></IconButton>
              </Actions>
            </OpeningTop>
            <Dims>
              {[["ANCHO", "1.20"], ["ALTO", "1.40"], ["ANTEPECHO", "1.00"]].map(([k, v]) => (
                <Dim key={k}>
                  <DimName>{k}</DimName>
                  <DimInput defaultValue={v} />
                  m
                </Dim>
              ))}
            </Dims>
          </Opening>
          <Pair>
            <DashedButton><Icon name="door" size={12} />Puerta</DashedButton>
            <DashedButton><Icon name="window" size={12} />Ventana</DashedButton>
          </Pair>
        </Section>

        <Section>
          <Fold $height={35}>
            <Icon name="right" size={12} weight={2.2} />
            <Heading as="span">ACABADO VERTICAL (3)</Heading>
          </Fold>
        </Section>
        <Section>
          <Fold $height={39}>
            <Icon name="right" size={12} weight={2.2} />
            <Heading as="span">RENDIMIENTO</Heading>
            <Badge><Dot />LOCAL</Badge>
          </Fold>
        </Section>
        <Section>
          <Fold $height={35}>
            <Icon name="right" size={12} weight={2.2} />
            <Heading as="span">AVANZADO</Heading>
          </Fold>
        </Section>
        <FieldStub />
      </Panel>

      <Dock>
        <Chat>
          <ChatInput aria-label="Mensaje" placeholder="Escribe un mensaje..." />
          <Send $size={26} aria-label="Enviar"><Icon name="up" size={10} weight={2.4} /></Send>
          <CursorBadge><Icon name="cursor" size={14} weight={2} /></CursorBadge>
        </Chat>
        <Hint>
          <Tint><Icon name="info" size={14} /></Tint>
          <span>
            Enter mueve la pared. <Key $fill>Alt</Key> o clic derecho abren las acciones del componente.
          </span>
        </Hint>
        <Status>
          <Ready><Dot $tone={color.accent} />Listo</Ready>
          <Speck />
          <span>8 paredes</span>
          <span>4 aperturas</span>
          <Speck />
          <Readout>X 6,90 Y 5,40</Readout>
          <Speck />
          <Readout>Zoom 219%</Readout>
          <Speck />
          <Pill><Icon name="library" size={12} />Modo completo<Icon name="up" size={10} weight={2.2} /></Pill>
          <Toggle $on><Tick type="checkbox" />Cuadrícula</Toggle>
          <Pill><Icon name="magnet" size={12} />Ajuste<Icon name="up" size={10} weight={2.2} /></Pill>
          <Toggle><Tick type="checkbox" />Orto <Key $fill>Shift</Key></Toggle>
          <Pill><Icon name="bulb" size={12} />Consejos</Pill>
          <Pill><Icon name="copilot" size={12} />Copiloto</Pill>
          <Pill><Icon name="area" size={12} />Área de la losa</Pill>
        </Status>
      </Dock>
    </Shell>
  );
}
